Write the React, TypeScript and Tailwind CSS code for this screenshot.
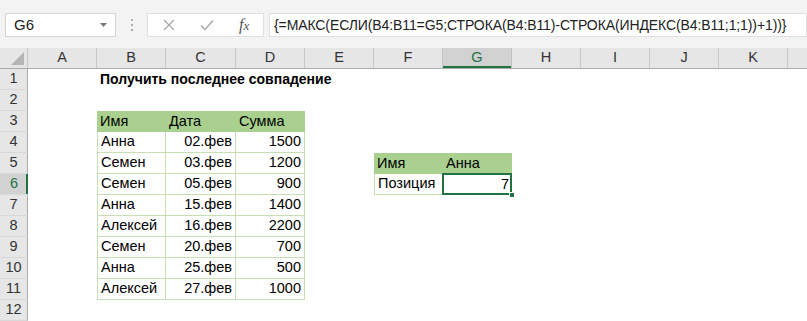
import React from "react";

const COLS = ["A", "B", "C", "D", "E", "F", "G", "H", "I", "J", "K", "L"];
const WIDTHS = [69, 69, 70, 69, 69, 69, 69, 69, 69, 69, 69, 69];
const ROWS = 12;

type Cell = {
  text?: string;
  align?: "left" | "right";
  bold?: boolean;
  kind?: "head" | "data" | "sel";
  left?: boolean;
};

const data: Record<string, Cell> = {
  B1: { text: "Получить последнее совпадение", bold: true },
  B3: { text: "Имя", kind: "head" },
  C3: { text: "Дата", kind: "head" },
  D3: { text: "Сумма", kind: "head" },
  F5: { text: "Имя", kind: "head" },
  G5: { text: "Анна", kind: "head" },
  F6: { text: "Позиция", kind: "data", left: true },
  G6: { text: "7", align: "right", kind: "sel" },
};

const rows: [string, string, string][] = [
  ["Анна", "02.фев", "1500"],
  ["Семен", "03.фев", "1200"],
  ["Семен", "05.фев", "900"],
  ["Анна", "15.фев", "1400"],
  ["Алексей", "16.фев", "2200"],
  ["Семен", "20.фев", "700"],
  ["Анна", "25.фев", "500"],
  ["Алексей", "27.фев", "1000"],
];

rows.forEach(([name, date, sum], i) => {
  const r = i + 4;
  data[`B${r}`] = { text: name, kind: "data", left: true };
  data[`C${r}`] = { text: date, align: "right", kind: "data" };
  data[`D${r}`] = { text: sum, align: "right", kind: "data" };
});

function SheetCell({ cell, width }: { cell?: Cell; width: number }) {
  let cls = "relative flex h-full shrink-0 items-center whitespace-nowrap px-[3px] text-black";
  if (cell?.kind === "head") cls += " bg-[#a9d08e]";
  if (cell?.kind === "data") cls += " border-b border-r border-[#c6e0b4]";
  if (cell?.left) cls += " border-l";
  if (cell?.align === "right") cls += " justify-end";
  cls += cell?.bold ? " font-bold text-[14px]" : " text-[14.5px]";
  return (
    <div className={cls} style={{ width }}>
      {cell?.kind === "sel" && (
        <>
          <div className="absolute -left-px -top-px bottom-0 right-0 border-2 border-[#217346]" />
          <div className="absolute -bottom-[3px] -right-[3px] h-[6px] w-[6px] border border-white bg-[#217346]" />
        </>
      )}
      <span>{cell?.text}</span>
    </div>
  );
}

function FormulaBar() {
  return (
    <div className="flex h-[48px] items-start bg-[#f3f3f3] pt-[13px]">
      <div className="ml-[5px] flex h-[24px] w-[111px] shrink-0 items-center justify-between border border-[#d4d4d4] bg-white pl-[8px] pr-[8px] text-[15px] text-[#222]">
        <span>G6</span>
        <svg width="7" height="4" viewBox="0 0 7 4">
          <path d="M0 0h7L3.5 4z" fill="#777" />
        </svg>
      </div>
      <div className="flex h-[24px] w-[31px] shrink-0 flex-col items-center justify-center gap-[3px]">
        <span className="h-[2px] w-[2px] bg-[#b0b0b0]" />
        <span className="h-[2px] w-[2px] bg-[#b0b0b0]" />
        <span className="h-[2px] w-[2px] bg-[#b0b0b0]" />
      </div>
      <div className="flex h-[24px] w-[117px] shrink-0 items-center border border-[#e0e0e0] bg-white">
        <svg className="ml-[15px]" width="12" height="12" viewBox="0 0 12 12">
          <path d="M1 1l10 10M11 1L1 11" stroke="#a8a8a8" strokeWidth="1.3" />
        </svg>
        <svg className="ml-[25px]" width="14" height="12" viewBox="0 0 14 12">
          <path d="M1 6.5l4 4L13 1.5" stroke="#a8a8a8" strokeWidth="1.5" fill="none" />
        </svg>
        <span className="ml-[25px] font-['Liberation_Serif'] text-[16px] italic text-[#555]">
          f<span className="text-[13px]">x</span>
        </span>
      </div>
      <div className="ml-[5px] flex h-[24px] min-w-0 flex-1 items-center whitespace-nowrap border border-[#e0e0e0] bg-white pl-[4px] text-[14px] tracking-[-0.1px] text-[#222]">
        {"{=МАКС(ЕСЛИ(B4:B11=G5;СТРОКА(B4:B11)-СТРОКА(ИНДЕКС(B4:B11;1;1))+1))}"}
      </div>
    </div>
  );
}

function ColumnHeader() {
  return (
    <div className="flex h-[21px] border-b border-[#ababab] bg-[#e6e6e6]">
      <div className="relative w-[28px] shrink-0 border-r border-[#c8c8c8]">
        <svg className="absolute bottom-[3px] right-[3px]" width="13" height="13" viewBox="0 0 13 13">
          <path d="M13 0V13H0z" fill="#b5b5b5" />
        </svg>
      </div>
      {COLS.map((c, i) => (
        <div
          key={c}
          className={
            "flex shrink-0 items-center justify-center border-r text-[14.5px] " +
            (c === "G"
              ? "border-[#c0c0c0] bg-[#d2d2d2] text-[#217346] shadow-[inset_0_-2px_0_#217346]"
              : "border-[#c8c8c8] text-[#333]")
          }
          style={{ width: WIDTHS[i] }}
        >
          {c === "L" ? null : c}
        </div>
      ))}
    </div>
  );
}

export default function App() {
  return (
    <div className="h-[321px] w-[807px] overflow-hidden bg-white font-['Liberation_Sans',sans-serif]">
      <FormulaBar />
      <ColumnHeader />
      {Array.from({ length: ROWS }, (_, ri) => {
        const r = ri + 1;
        return (
          <div key={r} className="flex h-[21px]">
            <div
              className={
                "flex w-[28px] shrink-0 items-center justify-center border-b border-[#d8d8d8] text-[14.5px] " +
                (r === 6
                  ? "bg-[#d2d2d2] text-[#217346] shadow-[inset_-2px_0_0_#217346]"
                  : "bg-[#e6e6e6] text-[#333] border-r border-r-[#ababab]")
              }
            >
              {r}
            </div>
            {COLS.map((c, i) => (
              <SheetCell key={c} cell={data[`${c}${r}`]} width={WIDTHS[i]} />
            ))}
          </div>
        );
      })}
    </div>
  );
}
